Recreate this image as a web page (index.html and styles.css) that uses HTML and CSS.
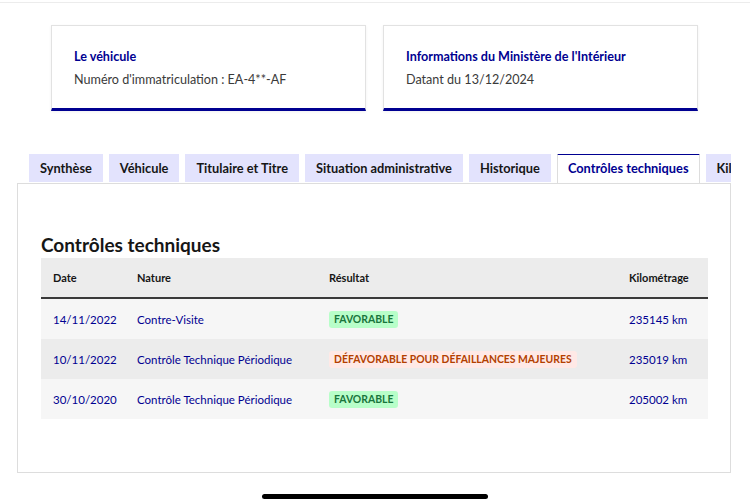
FILE: index.html
```html
<!DOCTYPE html>
<html lang="fr">
<head>
  <meta charset="UTF-8">
  <meta name="viewport" content="width=device-width, initial-scale=1.0">
  <title>Contrôles techniques</title>
  <link rel="stylesheet" href="styles.css">
</head>
<body>
  <div class="topbar"></div>

  <div class="cards">
    <div class="card">
      <div class="card-title">Le véhicule</div>
      <div class="card-text">Numéro d'immatriculation : EA-4**-AF</div>
    </div>
    <div class="card">
      <div class="card-title">Informations du Ministère de l'Intérieur</div>
      <div class="card-text">Datant du 13/12/2024</div>
    </div>
  </div>

  <div class="tabs-box">
    <ul class="tabs">
      <li class="tab">Synthèse</li>
      <li class="tab">Véhicule</li>
      <li class="tab">Titulaire et Titre</li>
      <li class="tab">Situation administrative</li>
      <li class="tab">Historique</li>
      <li class="tab active">Contrôles techniques</li>
      <li class="tab">Kilométrage</li>
    </ul>

    <div class="panel">
      <h2>Contrôles techniques</h2>
      <table class="ct-table">
        <colgroup>
          <col class="col-date">
          <col class="col-nature">
          <col class="col-result">
          <col>
        </colgroup>
        <thead>
          <tr>
            <th>Date</th>
            <th>Nature</th>
            <th>Résultat</th>
            <th>Kilométrage</th>
          </tr>
        </thead>
        <tbody>
          <tr>
            <td>14/11/2022</td>
            <td>Contre-Visite</td>
            <td><span class="badge ok">Favorable</span></td>
            <td>235145 km</td>
          </tr>
          <tr>
            <td>10/11/2022</td>
            <td>Contrôle Technique Périodique</td>
            <td><span class="badge ko">Défavorable pour défaillances majeures</span></td>
            <td>235019 km</td>
          </tr>
          <tr>
            <td>30/10/2020</td>
            <td>Contrôle Technique Périodique</td>
            <td><span class="badge ok">Favorable</span></td>
            <td>205002 km</td>
          </tr>
        </tbody>
      </table>
    </div>
  </div>

  <div class="home-bar"></div>
</body>
</html>
```

FILE: styles.css
```css
body {
  font-family: Lato, "Open Sans", sans-serif;
  margin: 0;
  padding: 0;
  background-color: #fff;
  color: #161616;
  width: 750px;
  height: 500px;
  overflow: hidden;
}

.topbar {
  height: 2px;
  border-bottom: 1px solid #ececec;
}

/* cartes du haut */
.cards {
  display: flex;
  gap: 17px;
  margin: 22px 0 0 51px;
}

.card {
  width: 315px;
  height: 86px;
  padding: 21px 22px 0;
  border: 1px solid #e2e2e2;
  border-bottom: 3px solid #000091;
  box-sizing: border-box;
  box-shadow: 0 1px 3px rgba(0, 0, 0, 0.06);
}

.card-title {
  color: #000091;
  font-weight: bold;
  font-size: 12.6px;
  line-height: 20px;
}

.card-text {
  color: #3a3a3a;
  font-size: 12.6px;
  line-height: 20px;
  margin-top: 3px;
}

/* onglets */
.tabs-box {
  width: 714px;
  margin: 43px 0 0 17px;
  overflow: hidden;
}

.tabs {
  list-style: none;
  display: flex;
  gap: 6px;
  margin: 0;
  padding: 0 0 0 12px;
  white-space: nowrap;
  position: relative;
  z-index: 1;
}

.tab {
  flex: none;
  height: 28px;
  line-height: 28px;
  padding: 0 11px;
  background-color: #e3e3fd;
  font-weight: bold;
  font-size: 12.8px;
  color: #161616;
}

.tab.active {
  background-color: #fff;
  color: #000091;
  border-top: 2px solid #000091;
  border-left: 1px solid #ddd;
  border-right: 1px solid #ddd;
  height: 27px;
  line-height: 27px;
  margin-top: -1px;
  padding: 0 10px 1px;
}

.panel {
  height: 290px;
  border: 1px solid #ddd;
  padding: 49px 23px 0 23px;
  box-sizing: border-box;
}

.panel h2 {
  margin: 0 0 1px;
  font-size: 19px;
  line-height: 24px;
  font-weight: bold;
  color: #161616;
}

/* tableau */
.ct-table {
  width: 667px;
  table-layout: fixed;
  border-collapse: collapse;
  font-size: 11.5px;
}

.col-date { width: 96px; }
.col-nature { width: 192px; }
.col-result { width: 300px; }

.ct-table th {
  background-color: #ececec;
  height: 39px;
  text-align: left;
  font-weight: bold;
  font-size: 11px;
  color: #161616;
  padding: 0;
  border-bottom: 2px solid #3a3a3a;
}

.ct-table td {
  height: 40px;
  padding: 0;
  color: #000091;
  background-color: #f6f6f6;
  white-space: nowrap;
}

.ct-table th:first-child,
.ct-table td:first-child {
  padding-left: 12px;
}

.ct-table tbody tr:nth-child(2) td {
  background-color: #ececec;
}

.badge {
  display: inline-block;
  padding: 0 5px;
  line-height: 17px;
  border-radius: 3px;
  font-size: 10.4px;
  font-weight: bold;
  text-transform: uppercase;
}

.badge.ok {
  background-color: #b8fec9;
  color: #18753c;
}

.badge.ko {
  background-color: #ffe9e6;
  color: #b34000;
}

.home-bar {
  width: 226px;
  height: 5px;
  margin: 21px auto 0;
  background-color: #000;
  border-radius: 3px;
}
```
